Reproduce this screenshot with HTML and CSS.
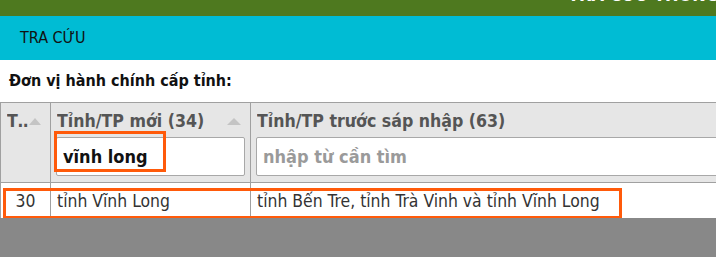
FILE: index.html
```html
<!DOCTYPE html>
<html lang="vi">

<head>
    <meta charset="UTF-8">
    <meta name="viewport" content="width=device-width, initial-scale=1.0">
    <title>Tra cứu</title>
    <link rel="stylesheet" href="styles.css">
</head>

<body>
    <div class="top-bar">
        <span class="top-title">TRA CỨU THÔNG TIN ĐƠN VỊ HÀNH CHÍNH</span>
    </div>
    <div class="nav-bar">TRA CỨU</div>

    <div class="content">
        <div class="caption">Đơn vị hành chính cấp tỉnh:</div>
        <table class="grid">
            <thead>
                <tr>
                    <th class="col-stt">
                        <div class="head-label"><span class="label-text">Thứ tự</span><span class="sort"></span></div>
                    </th>
                    <th class="col-new">
                        <div class="head-label"><span class="label-text">Tỉnh/TP mới (34)</span><span class="sort"></span></div>
                        <input class="filter" type="text" value="vĩnh long">
                    </th>
                    <th class="col-old">
                        <div class="head-label"><span class="label-text">Tỉnh/TP trước sáp nhập (63)</span></div>
                        <input class="filter" type="text" placeholder="nhập từ cần tìm">
                    </th>
                </tr>
            </thead>
            <tbody>
                <tr>
                    <td class="num">30</td>
                    <td>tỉnh Vĩnh Long</td>
                    <td>tỉnh Bến Tre, tỉnh Trà Vinh và tỉnh Vĩnh Long</td>
                </tr>
            </tbody>
        </table>
    </div>

    <!-- khung đánh dấu -->
    <div class="mark mark-input"></div>
    <div class="mark mark-row"></div>
</body>

</html>
```

FILE: styles.css
```css
body {
    margin: 0;
    background-color: #888888;
    font-family: "DejaVu Sans", Verdana, sans-serif;
    font-stretch: condensed;
    overflow: hidden;
    position: relative;
}

.top-bar {
    height: 16px;
    background-color: #4e791f;
    overflow: hidden;
    padding-left: 568px;
    white-space: nowrap;
}

.top-title {
    display: block;
    margin-top: -14px;
    line-height: 18px;
    font-size: 18px;
    font-weight: bold;
    color: #ffffff;
}

.nav-bar {
    height: 44px;
    line-height: 44px;
    padding-left: 20px;
    background-color: #00bcd4;
    color: #111111;
    font-family: "Liberation Sans Narrow", "DejaVu Sans", sans-serif;
    font-size: 16px;
}

.content {
    background-color: #ffffff;
    width: 1100px;
}

.caption {
    height: 42px;
    line-height: 42px;
    padding-left: 9px;
    font-size: 16px;
    font-weight: bold;
    color: #111111;
}

.grid {
    border-collapse: collapse;
    table-layout: fixed;
    width: 900px;
}

.grid th {
    background-color: #e6e6e6;
    border: 1px solid #a0a0a0;
    padding: 6px 5px 6px 5px;
    text-align: left;
    vertical-align: top;
    font-weight: bold;
    color: #555555;
    font-size: 17.6px;
}

.col-stt {
    width: 39px;
}

.col-new {
    width: 189px;
}

.col-old {
    width: 640px;
}

.head-label {
    display: flex;
    align-items: center;
    height: 24px;
    padding-left: 1px;
}

.label-text {
    flex: 1;
    overflow: hidden;
    white-space: nowrap;
    text-overflow: ellipsis;
}

.col-stt .label-text {
    flex: 0 0 22px;
}

.sort {
    width: 0;
    height: 0;
    margin-right: 4px;
    border-left: 7px solid transparent;
    border-right: 7px solid transparent;
    border-bottom: 7px solid #c4c4c4;
}

.col-stt .sort {
    margin-right: 0;
    border-left-width: 6px;
    border-right-width: 6px;
}

.filter {
    display: block;
    box-sizing: border-box;
    width: 100%;
    height: 39px;
    margin-top: 4px;
    padding: 0 6px;
    border: 1px solid #a8a8a8;
    border-radius: 2px;
    background-color: #ffffff;
    font-family: inherit;
    font-stretch: condensed;
    font-size: 18px;
    font-weight: bold;
    color: #111111;
    outline: none;
}

.filter::placeholder {
    color: #9a9a9a;
}

.grid td {
    height: 35px;
    padding: 0 6px;
    border-left: 1px solid #a0a0a0;
    border-right: 1px solid #a0a0a0;
    font-size: 17.4px;
    color: #333333;
    white-space: nowrap;
}

.grid td.num {
    text-align: center;
}

.mark {
    position: absolute;
    border: 3px solid #ff5a0a;
}

.mark-input {
    left: 54px;
    top: 131px;
    width: 106px;
    height: 35px;
}

.mark-row {
    left: 3px;
    top: 188px;
    width: 613px;
    height: 25px;
}
```
